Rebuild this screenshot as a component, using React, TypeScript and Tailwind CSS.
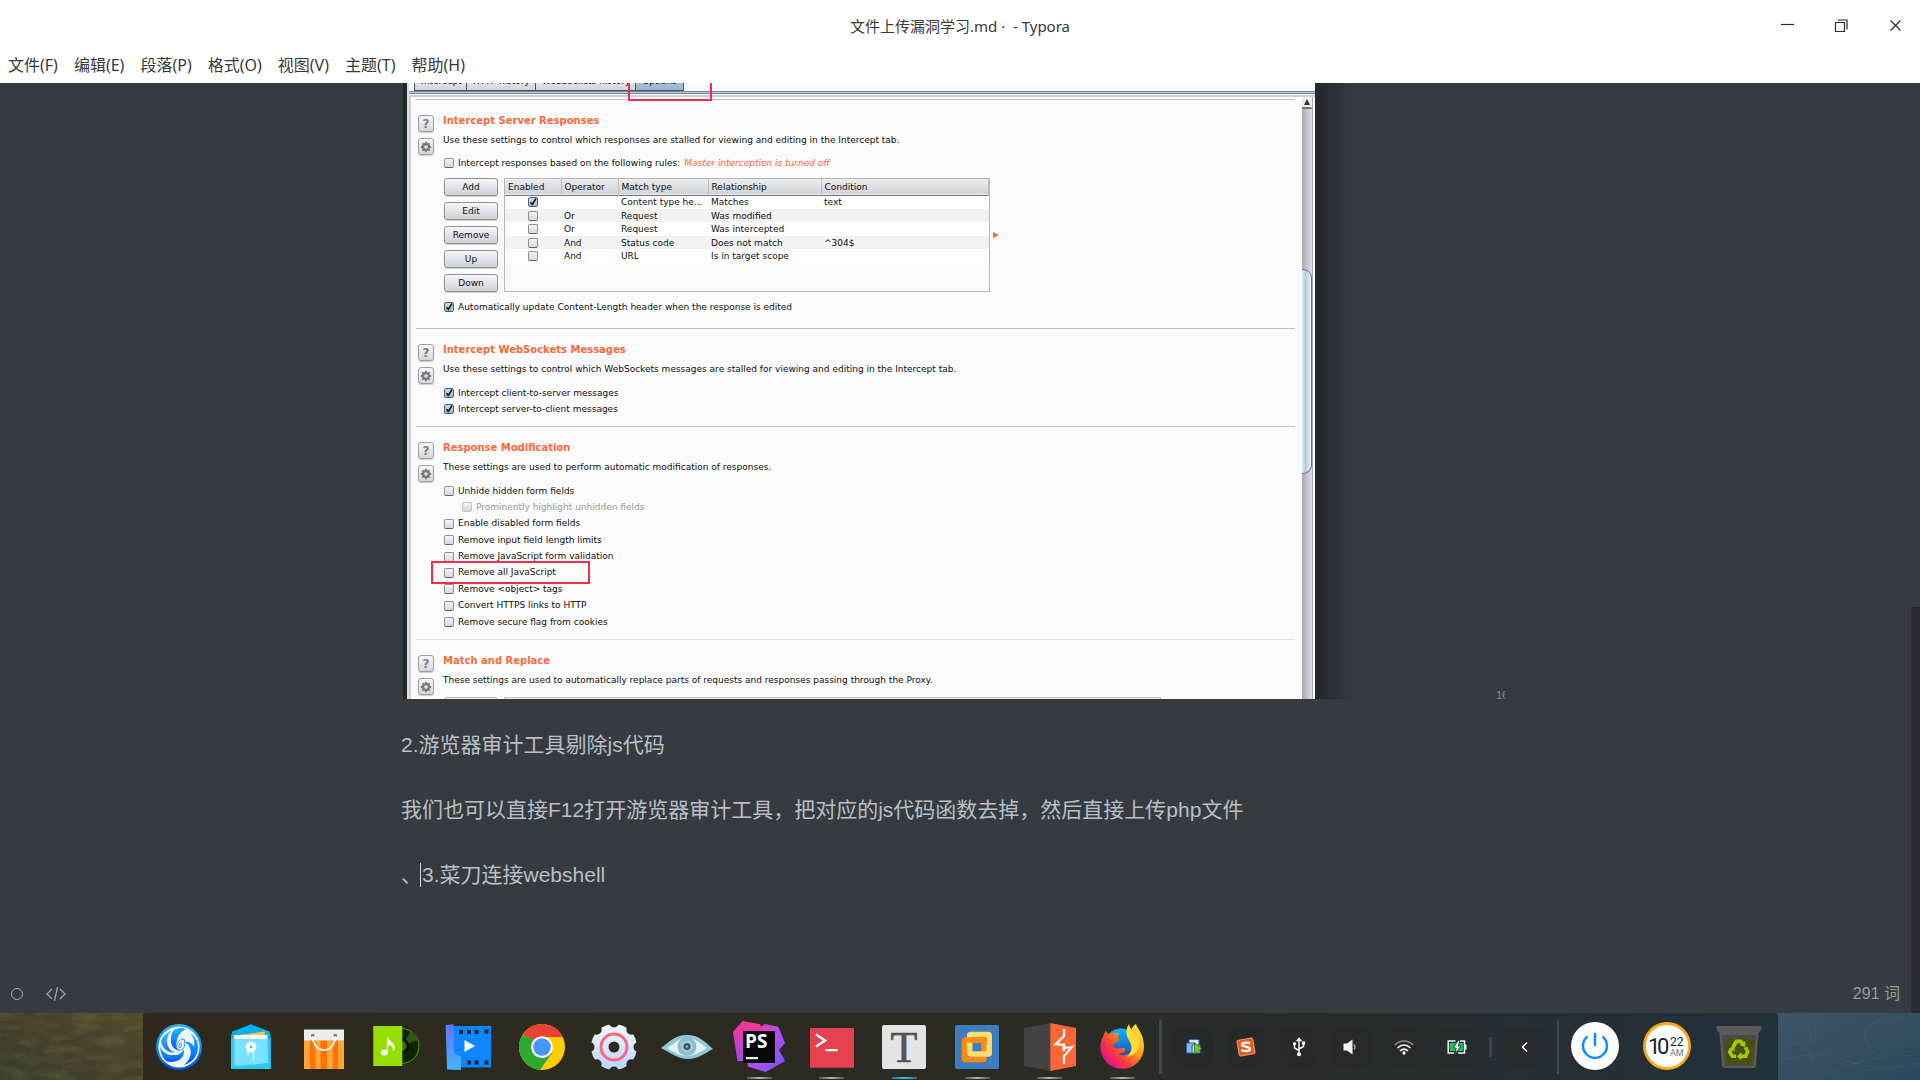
import React, { ReactNode } from "react";

const menus = ["文件(F)", "编辑(E)", "段落(P)", "格式(O)", "视图(V)", "主题(T)", "帮助(H)"];

const rules = [
  { on: true, op: "", type: "Content type he...", rel: "Matches", cond: "text" },
  { on: false, op: "Or", type: "Request", rel: "Was modified", cond: "" },
  { on: false, op: "Or", type: "Request", rel: "Was intercepted", cond: "" },
  { on: false, op: "And", type: "Status code", rel: "Does not match", cond: "^304$" },
  { on: false, op: "And", type: "URL", rel: "Is in target scope", cond: "" },
];

function Box({ id, checked, disabled, label }: { id: string; checked?: boolean; disabled?: boolean; label?: string }) {
  return (
    <span className="relative block h-[10px] w-[10px] shrink-0">
      <input
        id={id}
        type="checkbox"
        aria-label={label}
        defaultChecked={checked}
        disabled={disabled}
        className="peer block h-[10px] w-[10px] appearance-none rounded-[2px] border border-[#8d9096] border-b-[#5f646d] bg-linear-to-b from-[#f4f4f6] to-[#d6d8df] checked:border-[#4c6176] checked:from-[#c9dbe9] checked:to-[#9dbbd3] disabled:border-[#c4c6cb]"
      />
      <svg viewBox="0 0 10 10" className="pointer-events-none absolute inset-0 hidden h-[10px] w-[10px] peer-checked:block">
        <path d="M2.5 5.2 4.3 7.5 8 1.5" fill="none" stroke="#10151a" strokeWidth="1.5" />
      </svg>
    </span>
  );
}

function Check({ id, checked, disabled, children }: { id: string; checked?: boolean; disabled?: boolean; children: ReactNode }) {
  return (
    <div className="flex h-4 items-center gap-1">
      <Box id={id} checked={checked} disabled={disabled} />
      <label htmlFor={id} className={disabled ? "text-[#9a9a9a]" : ""}>
        {children}
      </label>
    </div>
  );
}

function SideButton({ label, children }: { label: string; children: ReactNode }) {
  return (
    <button
      aria-label={label}
      className="flex h-[17px] w-4 items-center justify-center rounded-[3px] border border-[#9b9ea5] bg-linear-to-b from-[#f7f7f9] to-[#d5d7de] shadow-[0_1px_1px_#00000030]"
    >
      {children}
    </button>
  );
}

function Section({ title, text, faint, children }: { title: string; text: string; faint?: boolean; children?: ReactNode }) {
  return (
    <section className={`flex gap-[9px] border-t pl-[2px] ${faint ? "border-[#e2e2e4]" : "border-[#bfc0c3]"}`}>
      <div className="flex flex-col gap-[6px] pt-[15px]">
        <SideButton label="Help">
          <span className="text-[12px] leading-3 font-bold text-[#7b7d80]">?</span>
        </SideButton>
        <SideButton label="Options">
          <svg viewBox="0 0 12 12" className="h-3 w-3">
            <circle cx="6" cy="6" r="3" fill="none" stroke="#7b7d80" strokeWidth="2.4" />
            <path d="M6 .8v2M6 9.2v2M.8 6h2M9.2 6h2M2.3 2.3l1.4 1.4M8.3 8.3l1.4 1.4M9.7 2.3 8.3 3.7M3.7 8.3 2.3 9.7" stroke="#7b7d80" strokeWidth="1.8" />
          </svg>
        </SideButton>
      </div>
      <div className="flex-1 pt-[11px]">
        <h2 className="text-[10px] leading-[19px] font-bold text-[#f96a3a]">{title}</h2>
        <p className="leading-5">{text}</p>
        <div className="pl-px">{children}</div>
      </div>
    </section>
  );
}

function Tab({ children, active }: { children: ReactNode; active?: boolean }) {
  return (
    <button
      className={`h-[18px] border-r border-b border-[#4d525b] px-[6px] text-[9px] leading-[17px] ${
        active ? "bg-linear-to-b from-[#b9cfe0] to-[#9ab6cd]" : "bg-linear-to-b from-[#eeeef1] to-[#d5d6dc]"
      }`}
    >
      {children}
    </button>
  );
}

function ProxyOptions() {
  return (
    <div className="relative flex h-[616px] w-[908px] flex-col overflow-hidden border-l-2 border-[#dfe0e4] bg-[#fbfbfb] font-['DejaVu_Sans',sans-serif] text-[9px] text-[#101010]">
      <div className="-mt-[10px] flex pl-[5px] whitespace-nowrap">
        <div className="flex border-l border-[#4d525b]">
          <div className="flex w-[52px] flex-col"><Tab>Intercept</Tab></div>
          <div className="flex w-[69px] flex-col"><Tab>HTTP history</Tab></div>
          <div className="flex w-[100px] flex-col"><Tab>WebSockets history</Tab></div>
          <div className="flex w-[48px] flex-col"><Tab active>Options</Tab></div>
        </div>
      </div>
      <div className="h-[3px] shrink-0 border-y border-[#7289a1] bg-[#b8cbdb]" />
      <div className="mt-px flex flex-1 border-t-2 border-l-2 border-[#cfd0d4]">
        <div className="flex-1 pt-[2px] pr-[7px] pl-[5px]">
          <Section title="Intercept Server Responses" text="Use these settings to control which responses are stalled for viewing and editing in the Intercept tab.">
            <div className="mt-[5px] flex items-center gap-1 leading-4">
              <Check id="rules">Intercept responses based on the following rules:</Check>
              <em className="text-[#f96a3a]">Master interception is turned off</em>
            </div>
            <div className="mt-[7px] flex">
              <div className="flex w-[54px] flex-col gap-[6px]">
                {["Add", "Edit", "Remove", "Up", "Down"].map((b) => (
                  <button
                    key={b}
                    className="h-[18px] rounded-[3px] border border-[#8f929a] bg-linear-to-b from-[#f8f8fa] via-[#e3e4e9] to-[#cfd1d9] leading-4 shadow-[0_1px_1px_#00000030]"
                  >
                    {b}
                  </button>
                ))}
              </div>
              <div className="ml-[6px] h-[114px] w-[486px] border border-[#b4b7bd]">
                <table className="w-full table-fixed border-collapse text-left">
                  <colgroup>
                    <col className="w-[56px]" />
                    <col className="w-[57px]" />
                    <col className="w-[90px]" />
                    <col className="w-[113px]" />
                    <col />
                  </colgroup>
                  <thead>
                    <tr className="h-4 border-b border-[#6e7682] bg-linear-to-b from-[#ececef] to-[#d3d5da]">
                      {["Enabled", "Operator", "Match type", "Relationship", "Condition"].map((h) => (
                        <th key={h} className="border-r border-[#b9bcc3] p-0 pl-[3px] leading-3 font-normal">
                          {h}
                        </th>
                      ))}
                    </tr>
                  </thead>
                  <tbody className="leading-3 whitespace-nowrap">
                    {rules.map((r, i) => (
                      <tr key={i} className={i % 2 ? "h-[13px] bg-[#f2f2f2]" : "h-[14px] bg-white"}>
                        <td className="p-0 pl-[23px]">
                          <Box id={`rule${i}`} checked={r.on} label={`Rule ${i + 1}`} />
                        </td>
                        <td className="p-0 pl-[3px]">{r.op}</td>
                        <td className="p-0 pl-[3px]">{r.type}</td>
                        <td className="p-0 pl-[3px]">{r.rel}</td>
                        <td className="p-0 pl-[3px]">{r.cond}</td>
                      </tr>
                    ))}
                  </tbody>
                </table>
              </div>
              <svg viewBox="0 0 6 6" className="mt-[54px] ml-[3px] h-[6px] w-[6px]">
                <path d="M0 0 6 3 0 6z" fill="#ff6633" />
              </svg>
            </div>
            <div className="mt-[7px] mb-[13px]">
              <Check id="length" checked>Automatically update Content-Length header when the response is edited</Check>
            </div>
          </Section>
          <Section title="Intercept WebSockets Messages" text="Use these settings to control which WebSockets messages are stalled for viewing and editing in the Intercept tab.">
            <div className="mt-[6px] mb-[9px]">
              <Check id="c2s" checked>Intercept client-to-server messages</Check>
              <Check id="s2c" checked>Intercept server-to-client messages</Check>
            </div>
          </Section>
          <Section title="Response Modification" text="These settings are used to perform automatic modification of responses.">
            <div className="mt-[6px] mb-[9px] flex h-[147px] flex-col justify-between">
              <Check id="m1">Unhide hidden form fields</Check>
              <div className="pl-[18px]">
                <Check id="m2" disabled>Prominently highlight unhidden fields</Check>
              </div>
              <Check id="m3">Enable disabled form fields</Check>
              <Check id="m4">Remove input field length limits</Check>
              <Check id="m5">Remove JavaScript form validation</Check>
              <div className="relative">
                <Check id="m6">Remove all JavaScript</Check>
                <div className="absolute -top-1 -left-[13px] z-10 h-[23px] w-[159px] border-2 border-[#f7294f]" />
              </div>
              <Check id="m7">Remove &lt;object&gt; tags</Check>
              <Check id="m8">Convert HTTPS links to HTTP</Check>
              <Check id="m9">Remove secure flag from cookies</Check>
            </div>
          </Section>
          <Section faint title="Match and Replace" text="These settings are used to automatically replace parts of requests and responses passing through the Proxy.">
            <div className="mt-[7px] flex gap-[6px]">
              <div className="h-[18px] w-[54px] rounded-[3px] border border-[#b4b7bd] bg-[#ececef]" />
              <div className="h-[18px] w-[657px] border border-[#c4c6cb] bg-[#ececef]" />
            </div>
          </Section>
        </div>
        <div className="mr-[2px] flex w-[11px] flex-col border-r border-[#a8abb3] bg-linear-to-r from-[#a9aab2] to-[#dcdde3]">
          <div className="flex h-[10px] items-center justify-center bg-[#ececef]">
            <svg viewBox="0 0 6 6" className="h-[6px] w-[6px]"><path d="M3 0 6 6H0z" fill="#333" /></svg>
          </div>
          <div className="h-[2px] rounded-tr bg-[#77797f]" />
          <div className="mt-[160px] h-[205px] rounded-r-[9px] border border-l-0 border-[#5b738c] bg-linear-to-r from-[#dfeaf2] via-[#b3cbdd] via-40% to-[#eef9ff]" />
          <div className="flex-1" />
          <div className="h-[2px] rounded-br bg-[#77797f]" />
          <div className="flex h-[10px] items-center justify-center bg-[#ececef]">
            <svg viewBox="0 0 6 6" className="h-[6px] w-[6px]"><path d="M3 6 6 0H0z" fill="#333" /></svg>
          </div>
        </div>
      </div>
      <div className="absolute -top-3 left-[219px] h-[30px] w-[84px] border-2 border-[#f7294f]" />
    </div>
  );
}

function Glyph({ children }: { children: ReactNode }) {
  return (
    <svg viewBox="0 0 56 56" className="h-14 w-14">
      {children}
    </svg>
  );
}

const Launcher = (
  <Glyph>
    <defs>
      <linearGradient id="lg" x1="0" y1="0" x2="0" y2="1"><stop offset="0" stopColor="#23b4ff" /><stop offset="1" stopColor="#0058f0" /></linearGradient>
    </defs>
    <circle cx="28" cy="28" r="23" fill="url(#lg)" />
    <circle cx="28" cy="28" r="20.6" fill="#eef6ff" />
    <g fill="url(#lg)">
      <path d="M23 11c6-3 9-2 12-1-6 3-8 7-9 11-2 7 0 10 3 11-6-1-10-6-9-12 0-4 1-7 3-9z" />
      <path d="M39 14c5 3 8 8 8 14 0 9-6 16-14 18 6-5 8-11 6-17-1-3-3-5-6-6 5-1 8 1 10 5 1-5 0-10-4-14z" />
      <path d="M9 27c2 6 8 10 14 9 5 0 8-2 10-6 1 8-5 13-13 13-3 0-5-1-6-2-3-4-5-8-5-14z" />
      <path d="M10 22c2-5 5-8 10-10-4 5-5 10-3 15 2 4 4 6 8 6-7 2-14-3-15-11z" opacity=".85" />
    </g>
    <path d="M33 20c-5 0-8 4-7 9 1 2 3 3 4 2 3-1 5-5 3-11zM30 24c1 2 0 4-1 5-2-1-1-4 1-5z" fill="#eef6ff" stroke="#0873f6" strokeWidth=".8" />
  </Glyph>
);

const Files = (
  <Glyph>
    <path d="M8 17 9.300 12.500 28 5.300 46.500 12.500 47.700 17V50H8z" fill="#08b0f5" />
    <path d="M10.500 17 41.700 12.500V24H10.500z" fill="#ffc83a" />
    <path d="M11.500 16h33v8h-33z" fill="#fff" />
    <path d="M8 20h39.700v30H8z" fill="#2bcaf9" />
    <path d="M11.300 20h33l1 24-31 3-3-1z" fill="#76e2ff" />
    <circle cx="28" cy="28" r="5.400" fill="#fff" /><circle cx="28" cy="28" r="1.200" fill="#2bb8ea" />
    <path d="M25 32v4M30.500 32v10" stroke="#fff" strokeWidth="1.400" />
  </Glyph>
);

const Store = (
  <Glyph>
    <path d="M8 21h40v29H8z" fill="#ffa53a" />
    <path d="M14 21h5.400v29H14zM24.500 21H31v29h-6.500zM36.800 21H42v29h-5.200z" fill="#ff7300" />
    <path d="M8 10.500h40V21.500H8z" fill="#ececec" />
    <circle cx="16.700" cy="16.500" r="1.700" fill="#8a6a5a" /><circle cx="39.300" cy="16.500" r="1.700" fill="#8a6a5a" />
    <path d="M16.700 17c0 8 4.500 14 11.300 14s11.300-6 11.300-14" fill="none" stroke="#fff" strokeWidth="1.700" />
  </Glyph>
);

const Music = (
  <Glyph>
    <circle cx="33.500" cy="27" r="17.500" fill="#102400" stroke="#4d9a08" strokeWidth="1" />
    <path d="m34 27 9-15a17 17 0 0 1 7 9z" fill="#2c5a0a" />
    <circle cx="33.500" cy="27" r="6.500" fill="#3d6d12" stroke="#050a00" strokeWidth="2.500" />
    <path d="M5.300 7h29v40h-29z" fill="#94de00" />
    <ellipse cx="16.500" cy="33.500" rx="3.700" ry="3" fill="#fff" />
    <path d="M19.300 33V18.500c1 4 7.500 5 7 10.500-.2 1.500-.6 2.500-1 3 .5-4-2-6-4.500-6.500" fill="#fff" stroke="#fff" strokeWidth="1" />
  </Glyph>
);

const Video = (
  <Glyph>
    <defs>
      <linearGradient id="vg" x1="0" y1="0" x2="0" y2="1"><stop offset="0" stopColor="#6a73ff" /><stop offset="1" stopColor="#3fb4ff" /></linearGradient>
    </defs>
    <path d="M12 7h38v41.500H12z" fill="#0d86ff" />
    <path d="M18 11h4v4h-4zM26 11h4v4h-4zM33.500 11h4v4h-4zM43.500 10.500h4v4h-4zM26 41.500h4v4h-4zM33.500 41.500h4v4h-4zM43.500 41.500h4v4h-4z" fill="#10233c" />
    <path d="M4.700 6 12.500 5.300 13 32c.5 4 4 4 7 5.500V51L6 50.500z" fill="url(#vg)" />
    <path d="M23.500 21v12L34 27z" fill="#fff" />
  </Glyph>
);

const Chrome = (
  <Glyph>
    <circle cx="28" cy="28" r="23" fill="#ffcd00" />
    <path d="M28 28 8.100 16.500A23 23 0 0 0 26 50.900L38 34z" fill="#2fa832" />
    <path d="M28 18h20.700A23 23 0 0 0 8.900 15.200L18 31z" fill="#ea4132" />
    <path d="M8.900 15.200 18.200 32l4-10z" fill="#2fa832" />
    <circle cx="28" cy="28" r="10.800" fill="#fff" /><circle cx="28" cy="28" r="8.800" fill="#4595fb" />
  </Glyph>
);

const teeth = [0, 45, 90, 135, 180, 225, 270, 315];
const Settings = (
  <Glyph>
    <defs>
      <linearGradient id="sg" gradientUnits="userSpaceOnUse" x1="0" y1="5" x2="0" y2="51"><stop offset="0" stopColor="#f2fbfd" /><stop offset="1" stopColor="#b9d3fb" /></linearGradient>
      <mask id="gearMask">
        <circle cx="28" cy="28" r="23" fill="#fff" />
        {teeth.map((a) => (
          <circle key={a} cx="28" cy="3.500" r="5" fill="#000" transform={`rotate(${a} 28 28)`} />
        ))}
        <circle cx="28" cy="28" r="5.500" fill="#000" />
      </mask>
    </defs>
    <rect width="56" height="56" fill="url(#sg)" mask="url(#gearMask)" />
    <circle cx="28" cy="28" r="13" fill="none" stroke="#ff6480" strokeWidth="3" />
  </Glyph>
);

const Eye = (
  <Glyph>
    <path d="M2 29C10 23 16 16 28 16s18 7 26 14c-8 4-15 10-25 10S12 34 2 29z" fill="#8fc6da" />
    <path d="M8 29c8-5 12-10 20-10s13 5 20 10c-7 4-12 8-20 8S15 33 8 29z" fill="#e6f1f5" />
    <circle cx="28" cy="27.500" r="9.500" fill="#8fbccb" /><circle cx="28" cy="27.500" r="6" fill="#a9cdd8" />
    <circle cx="28" cy="27.500" r="3.500" fill="#3c5666" /><circle cx="28" cy="27.500" r="1" fill="#c6dde6" />
  </Glyph>
);

const PhpStorm = (
  <Glyph>
    <defs>
      <linearGradient id="pg" x1="0" y1="0" x2="1" y2="1"><stop offset="0" stopColor="#ff3a8c" /><stop offset=".5" stopColor="#b74af7" /><stop offset="1" stopColor="#6b57ff" /></linearGradient>
      <linearGradient id="pg2" x1="0" y1="0" x2="0" y2="1"><stop offset="0" stopColor="#ff318c" /><stop offset="1" stopColor="#a04bf5" /></linearGradient>
    </defs>
    <path d="m26 10 8-5 13.300 2.700L54 24l-6 7 6 11-19.300 11L17 47.500 14 36z" fill="url(#pg)" />
    <path d="M2 12.700 11.700 2 29 5.300 34 14 18 42H6.500z" fill="url(#pg2)" />
    <path d="M12 12h32v32H12z" fill="#070707" />
    <text x="14" y="29" fontFamily="Open Sans, sans-serif" fontWeight="700" fontSize="19" fill="#fff">PS</text>
    <path d="M15 38h12v2.200H15z" fill="#fff" />
  </Glyph>
);

const Terminal = (
  <Glyph>
    <path d="M6 9h44v39.700H6z" fill="#e6414f" />
    <path d="m12 15.500 9 6-9 6" fill="none" stroke="#fff" strokeWidth="2.400" /><path d="M21.500 30h12v2.300h-12z" fill="#fff" />
  </Glyph>
);

const Typora = (
  <Glyph>
    <rect x="6" y="6" width="44" height="44" rx="2" fill="#e4e4e4" />
    <text x="28" y="43" textAnchor="middle" fontFamily="Liberation Serif, serif" fontSize="44" fill="#555" stroke="#555" strokeWidth=".7">T</text>
  </Glyph>
);

const VMware = (
  <Glyph>
    <rect x="6" y="6" width="44" height="44" rx="2" fill="#3e7cbf" />
    <rect x="15.500" y="21" width="19.500" height="19.500" rx="1" fill="none" stroke="#fb8c12" strokeWidth="5.500" />
    <rect x="20.700" y="15.500" width="19.500" height="19.500" rx="1" fill="none" stroke="#ffdd70" strokeWidth="5.500" />
    <path d="M18 21h17v5" fill="none" stroke="#fb8c12" strokeWidth="5.500" />
  </Glyph>
);

const Burp = (
  <Glyph>
    <path d="M2 9 28.300 4v48L2 47z" fill="#434343" />
    <path d="M28.300 4 54 9v38l-25.700 5z" fill="#ff6633" />
    <path d="M42 10v7l-8.500 8.500h8.500V32M41.500 31v-5M42 29l8-1-8 9v7.500" fill="none" stroke="#fff" strokeWidth="2.200" />
  </Glyph>
);

const Firefox = (
  <Glyph>
    <defs>
      <linearGradient id="fg" x1=".9" y1=".1" x2=".15" y2=".8"><stop offset="0" stopColor="#ffe03a" /><stop offset=".4" stopColor="#ff9a1f" /><stop offset=".7" stopColor="#ff4433" /><stop offset="1" stopColor="#e3157f" /></linearGradient>
      <linearGradient id="fb" x1="0" y1="0" x2="0" y2="1"><stop offset="0" stopColor="#08b5ff" /><stop offset="1" stopColor="#273a9f" /></linearGradient>
    </defs>
    <circle cx="27" cy="26" r="16.500" fill="url(#fb)" />
    <path d="M11.500 11.500c1 2 2 3.500 4 3.500 4-2 8-1 10.500 0-3 1-3 3-1 5 0 3-4 3.500-6 5 0 4 4 5 7 4.300l5-.3c1 3-3 6-7 6 8 4 17-2 17-11 0-7-5-9-3-15 1-2 2.500-3 4-4 1 5 8 9 8 23a21.800 21.800 0 0 1-43.600 0c0-7 3-10 5.100-16.500z" fill="url(#fg)" />
    <path d="M34 5c-5 8-2 13 1 18 3 6 1 12-4 15 9-1 15-8 13-17-1-6-9-9-10-16z" fill="#ffdb33" transform="translate(1 0)" />
  </Glyph>
);

const apps: { name: string; icon: ReactNode; state?: "open" | "active" }[] = [
  { name: "Launcher", icon: Launcher },
  { name: "Files", icon: Files },
  { name: "App Store", icon: Store },
  { name: "Music", icon: Music },
  { name: "Movie", icon: Video },
  { name: "Chrome", icon: Chrome },
  { name: "Settings", icon: Settings },
  { name: "Image viewer", icon: Eye },
  { name: "PhpStorm", icon: PhpStorm, state: "open" },
  { name: "Terminal", icon: Terminal, state: "open" },
  { name: "Typora", icon: Typora, state: "active" },
  { name: "VMware", icon: VMware, state: "open" },
  { name: "Burp Suite", icon: Burp, state: "open" },
  { name: "Firefox", icon: Firefox, state: "open" },
];

const tray: { name: string; icon: ReactNode }[] = [
  {
    name: "Virtual machines",
    icon: (
      <>
        <path d="M5 2.500h10v7H5z" fill="#d6e4f5" stroke="#2d5fae" /><path d="M2.500 6h9v10h-9z" fill="#8fb4e6" stroke="#2d5fae" /><path d="M8 8h8v8H8z" fill="#b9d2f1" stroke="#2d5fae" />
        <path d="M10.500 6v11l7-5.500z" fill="#6fd01c" stroke="#3a7d10" strokeWidth=".8" />
      </>
    ),
  },
  {
    name: "Input method",
    icon: (
      <>
        <rect x="2" y="2" width="16" height="16" rx="1.500" fill="#f0581a" stroke="#ffd8c2" strokeWidth=".6" transform="rotate(-10 10 10)" />
        <path d="M14 6.500c-3-1.500-8-1-8 1.200 0 2.500 8 1.500 8 4.300 0 2.300-5 2.700-8.500 1" fill="none" stroke="#fff" strokeWidth="2.400" />
      </>
    ),
  },
  {
    name: "USB",
    icon: (
      <g stroke="#f4f4f4" strokeWidth="1.500" fill="none">
        <path d="M10 2v15M10 13.500 5.500 11V7M10 12l4.500-2.500V6.500" />
        <circle cx="10" cy="17.200" r="1.300" fill="#f4f4f4" /><path d="m8.300 3.500 1.700-2 1.700 2z" fill="#f4f4f4" /><circle cx="5.500" cy="6.700" r=".9" fill="#f4f4f4" /><path d="M13.700 5.200h1.700v1.700h-1.700z" fill="#f4f4f4" />
      </g>
    ),
  },
  {
    name: "Volume",
    icon: (
      <>
        <path d="M1.500 6.500H5l5.500-4v15L5 13.500H1.500z" fill="#f4f4f4" /><path d="M12 7.500c1.200 1.500 1.200 3.500 0 5" stroke="#9b9b9b" strokeWidth="1.500" fill="none" />
      </>
    ),
  },
  {
    name: "Wi-Fi",
    icon: (
      <g fill="none" stroke="#f4f4f4" strokeWidth="1.500">
        <path d="M1 8c5-5.300 13-5.300 18 0" stroke="#8a8a8a" /><path d="M3.500 11c4-4 9-4 13 0" /><path d="M6 14c2.500-2.500 5.500-2.500 8 0" /><circle cx="10" cy="16" r=".9" fill="#f4f4f4" />
      </g>
    ),
  },
  {
    name: "Battery",
    icon: (
      <>
        <path d="M2.500 6H16v8H2.500z" fill="#10c65a" />
        <path d="M8.500 4H1.200v12h6M12.500 4h5v12h-6.500M18.800 7.500v5" fill="none" stroke="#f4f4f4" strokeWidth="1.500" />
        <path d="M11 3.500 6.500 11h2.700L8 17l6-8h-2.700l1.500-5.500z" fill="#f4f4f4" stroke="#26302e" strokeWidth=".8" />
      </>
    ),
  },
];

function Dock() {
  return (
    <footer className="flex h-[67px] justify-center overflow-hidden bg-linear-to-r from-[#464229] via-[#363b40] to-[#3d5566]">
      <svg viewBox="0 0 143 67" preserveAspectRatio="none" className="h-full min-w-0 flex-1">
        <defs>
          <linearGradient id="grass" x1="0" y1="1" x2="1" y2="0"><stop offset="0" stopColor="#3b3d2b" /><stop offset=".6" stopColor="#46422b" /><stop offset="1" stopColor="#544a2c" /></linearGradient>
          <filter id="noise"><feTurbulence type="fractalNoise" baseFrequency=".04 .12" numOctaves="3" seed="4" /><feColorMatrix values="0 0 0 0 .5  0 0 0 0 .45  0 0 0 0 .2  .6 0 0 0 -.22" /></filter>
        </defs>
        <rect width="143" height="67" fill="url(#grass)" /><rect width="143" height="67" filter="url(#noise)" opacity=".5" />
      </svg>
      <div className="flex shrink-0 items-center rounded-t-[4px] bg-linear-to-r from-[#2e291c] via-[#2b2b23] via-55% to-[#22303a]">
        <nav className="grid w-[1016px] grid-cols-14">
          {apps.map((a) => (
            <button key={a.name} aria-label={a.name} className="relative flex h-[67px] items-center justify-center">
              {a.icon}
              {a.state && (
                <span
                  className={`absolute bottom-px h-[2px] w-[25px] bg-linear-to-r ${
                    a.state === "active" ? "from-[#2c6f94] via-[#45b4ea] to-[#2c6f94]" : "from-[#55554f] via-[#b5b5b2] to-[#55554f]"
                  }`}
                />
              )}
            </button>
          ))}
        </nav>
        <div className="h-[54px] w-[3px] bg-[#434444]" />
        <div className="ml-[6px] grid w-[316px] grid-cols-6 justify-items-center">
          {tray.map((t) => (
            <button key={t.name} aria-label={t.name} className="flex h-10 w-10 items-center justify-center rounded-[10px] bg-[#2929297f]">
              <svg viewBox="0 0 20 20" className="h-5 w-5">{t.icon}</svg>
            </button>
          ))}
        </div>
        <div className="ml-[5px] h-5 w-[3px] bg-[#3f444a]" />
        <button aria-label="Expand" className="ml-[13px] flex h-10 w-10 items-center justify-center rounded-[10px] bg-[#2929297f]">
          <svg viewBox="0 0 20 20" className="h-5 w-5"><path d="M12 5.500 7.500 10l4.500 4.500" fill="none" stroke="#f4f4f4" strokeWidth="1.500" /></svg>
        </button>
        <div className="ml-3 h-[54px] w-[2px] bg-[#43484e]" />
        <div className="mr-[3px] grid w-[216px] grid-cols-3 justify-items-center">
          <button aria-label="Power">
            <Glyph>
              <circle cx="28" cy="27" r="24" fill="#fff" />
              <path d="M20.500 17.500a12 12 0 1 0 15 0M28 14v13" fill="none" stroke="#0d8bff" strokeWidth="2.400" />
            </Glyph>
          </button>
          <button aria-label="Clock">
            <Glyph>
              <circle cx="28" cy="27" r="22.500" fill="#fff" stroke="#fba914" strokeWidth="2.800" />
              <text x="9" y="35" fontFamily="Roboto, sans-serif" fontSize="22" fill="#10262a">1</text>
              <text x="18" y="35" fontFamily="Roboto, sans-serif" fontSize="22" fill="#10262a">0</text>
              <text x="31" y="27" fontFamily="Roboto, sans-serif" fontSize="12" fill="#10262a">22</text>
              <text x="31" y="37" fontFamily="Roboto, sans-serif" fontSize="9" fill="#6d7b7c">AM</text>
            </Glyph>
          </button>
          <button aria-label="Trash">
            <Glyph>
              <path d="M5.500 7h45v3.500L47.500 14 45 47q-.3 2-2.500 2h-29q-2.200 0-2.500-2L8.500 14l-3-3.500z" fill="#5a5a5a" />
              <path d="M11 16h34l-3 31H14z" fill="#4a4b48" />
              <path d="m13 24 6-6 7 3 8-4 5 5 5-1-2 25H15z" fill="#474f13" />
              <g transform="translate(2.500 3) scale(.9)">
                <g fill="none" stroke="#a5cc00" strokeWidth="4">
                  <path d="m21.500 28 4-6.500h5l2.500 4" /><path d="m35.500 28 2.500 5-2.500 5h-6" /><path d="M25 38h-4l-3-4.500 2-3.500" />
                </g>
                <path d="m35.500 21-.5 7-6-2.500zM31 33.500v9l-5-4.500zM17 30l5.500-3.500 1.500 6z" fill="#a5cc00" />
              </g>
            </Glyph>
          </button>
        </div>
      </div>
      <svg viewBox="0 0 142 67" preserveAspectRatio="none" className="h-full min-w-0 flex-1">
        <defs>
          <linearGradient id="slate" x1="0" y1="0" x2="1" y2="1"><stop offset="0" stopColor="#3d5566" /><stop offset="1" stopColor="#2c475c" /></linearGradient>
        </defs>
        <rect width="142" height="67" fill="url(#slate)" />
        <g fill="none" stroke="#6d8291" strokeWidth=".7" opacity=".25">
          <path d="M142 3c-25 0-55 4-56 18 0 12 12 20 20 26" /><path d="M0 50c25-12 45-10 70-2s40 8 72 2" /><path d="M8 30c10-4 20 4 28 18M50 62c20-12 40-18 92-20" /><path d="M24 4c10 8 6 18 10 26" />
        </g>
      </svg>
    </footer>
  );
}

export default function App() {
  return (
    <div className="flex h-screen flex-col overflow-hidden bg-[#363b40] font-['Noto_Sans','Noto_Sans_CJK_SC',sans-serif]">
      <header className="bg-white text-[15px] text-[#3a3a3a]">
        <div className="relative flex h-[52px] items-center justify-center">
          <h1 className="whitespace-pre">文件上传漏洞学习.md ·  - Typora</h1>
          <div className="absolute top-0 right-0 flex h-[50px] items-center gap-1">
            {[
              ["Minimize", "M6 11.500h13"],
              ["Restore", "M6.500 9.500h9v9h-9zM8.500 7h9.500v9.500"],
              ["Close", "m7.500 7.500 10 10M17.500 7.500l-10 10"],
            ].map(([name, d]) => (
              <button key={name} aria-label={name} className="flex h-[50px] w-[50px] items-center justify-center">
                <svg viewBox="0 0 25 25" className="h-[25px] w-[25px]"><path d={d} fill="none" stroke="#2a2a2a" strokeWidth="1.200" /></svg>
              </button>
            ))}
          </div>
        </div>
        <nav className="flex h-[31px] items-start gap-4 pl-2 text-base leading-[26px]">
          {menus.map((m) => (
            <button key={m}>{m}</button>
          ))}
        </nav>
      </header>
      <div className="flex min-h-0 flex-1">
        <main className="flex min-w-0 flex-1 flex-col text-[#b8bfc6]">
          <article className="mx-auto w-full max-w-[1109px] flex-1 font-['Liberation_Sans','Noto_Sans_CJK_SC',sans-serif] text-[21px] leading-[33px]">
            <figure className="flex">
              <div className="ml-[2px] w-1 bg-[#24292b]" />
              <ProxyOptions />
              <div className="w-10 bg-linear-to-r from-[#22272a] to-[#363b40]" />
              <figcaption className="ml-auto flex w-[14px] items-end">
                <span className="block h-[9px] w-[9px] overflow-hidden text-[11px] leading-[11px] text-[#85898d]">16</span>
              </figcaption>
            </figure>
            <div className="mt-[29px] flex flex-col gap-8">
              <p>2.游览器审计工具剔除js代码</p>
              <p>我们也可以直接F12打开游览器审计工具，把对应的js代码函数去掉，然后直接上传php文件</p>
              <p className="flex items-center">
                、<span className="-ml-[2px] mr-px h-6 w-px bg-[#d5dade]" />3.菜刀连接webshell
              </p>
            </div>
          </article>
          <div className="flex h-[39px] items-center px-[11px] text-base text-[#96999c]">
            <button aria-label="Toggle sidebar" className="h-3 w-3 rounded-full border border-[#a5a8ab]" />
            <button aria-label="Source mode" className="ml-[23px]">
              <svg viewBox="0 0 20 16" className="h-4 w-5"><path d="M6 3 1 8l5 5M14 3l5 5-5 5M11.500 1l-3 14" fill="none" stroke="#a5a8ab" strokeWidth="1.200" /></svg>
            </button>
            <span className="ml-auto font-['Liberation_Sans','Noto_Sans_CJK_SC',sans-serif]">291 词</span>
          </div>
        </main>
        <div className="flex w-[9px] flex-col justify-end">
          <div className="h-[406px] bg-[#2a2c31]" />
        </div>
      </div>
      <Dock />
    </div>
  );
}
